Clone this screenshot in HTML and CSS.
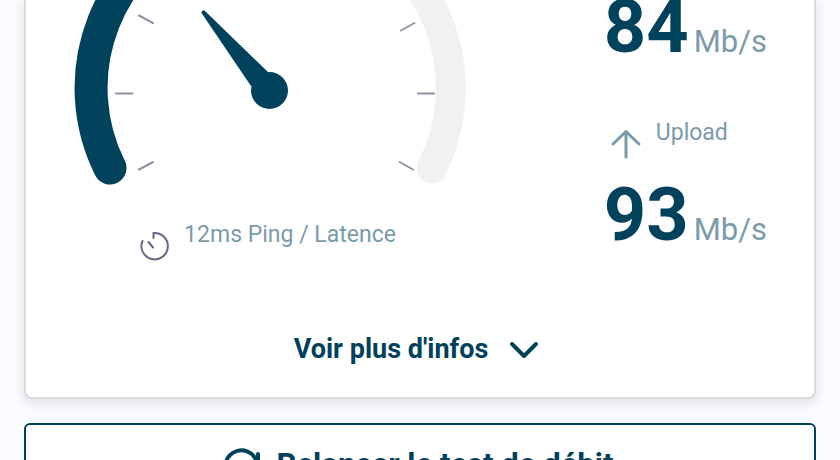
FILE: index.html
```html
<!DOCTYPE html>
<html lang="fr">
<head>
    <meta charset="UTF-8">
    <meta name="viewport" content="width=device-width, initial-scale=1.0">
    <title>Test de débit</title>
    <link rel="stylesheet" href="styles.css">
</head>
<body>
    <main class="page">
        <section class="card">
            <div class="results">
                <div class="speed">
                    <svg class="gauge" viewBox="0 0 400 190" aria-hidden="true">
                        <!-- track and progress -->
                        <path class="gauge-track" d="M266 -80A180.500 180.500 0 0 1 362 168"/>
                        <path class="gauge-progress" d="M40 168A179 179 0 0 1 138 -80"/>
                        <!-- ticks -->
                        <path class="gauge-ticks" d="M69 15.500L83 23M46 93.500H62.500M69 169.500L83 162M331 30.500L344.500 23M348 93.500H364M329.500 162L343 169.500"/>
                        <!-- needle -->
                        <path class="gauge-needle" d="M134.500 10.500L198 72L200 90L181 86L131.500 13Q131 10 134.500 10.500Z"/>
                        <circle class="gauge-needle" cx="199.500" cy="90.500" r="18.500"/>
                    </svg>
                    <div class="info info-ping">
                        <svg class="icon icon-ping" viewBox="0 0 32 32" aria-hidden="true">
                            <path d="M15.500 8V3A13.200 13.200 0 1 1 4.500 11M10.500 12L15 17.500"/>
                        </svg>
                        <span>12ms Ping / Latence</span>
                    </div>
                </div>
                <div class="rates">
                    <p class="rate"><strong>84</strong> <span>Mb/s</span></p>
                    <div class="info info-upload">
                        <svg class="icon" viewBox="0 0 32 32" aria-hidden="true">
                            <path d="M16 29V4M3 16L16 3.500L29 16"/>
                        </svg>
                        <span>Upload</span>
                    </div>
                    <p class="rate"><strong>93</strong> <span>Mb/s</span></p>
                </div>
            </div>
            <button type="button" class="more">
                Voir plus d'infos
                <svg class="more-icon" viewBox="0 0 32 32" aria-hidden="true">
                    <path d="M4 11L16 23L28 11"/>
                </svg>
            </button>
        </section>
        <button type="button" class="restart">
            <svg class="restart-icon" viewBox="0 0 40 40" aria-hidden="true">
                <path d="M35 9V18H26M34 17.500A16 16 0 1 0 33 28"/>
            </svg>
            Relancer le test de débit
        </button>
    </main>
</body>
</html>
```

FILE: styles.css
```css
* {
    box-sizing: border-box;
}
body {
    margin: 0;
    background-color: #fafbfe;
    color: #00425c;
    font-family: Roboto, "Liberation Sans", sans-serif;
    overflow: hidden;
}
.page {
    padding: 0 24px 24px;
}
.card {
    padding-bottom: 32px;
    background-color: #fff;
    border: 2px solid #d9dbdd;
    border-top: none;
    border-radius: 0 0 8px 8px;
    box-shadow: 0 3px 12px rgba(0, 20, 40, 0.13);
}
.results {
    display: flex;
    justify-content: space-between;
    padding: 0 47px 0 44px;
}
.gauge {
    display: block;
    width: 400px;
    margin-bottom: 30px;
}
.gauge path {
    fill: none;
    stroke-linecap: round;
}
.gauge .gauge-track {
    stroke: #f1f1f4;
    stroke-width: 30px;
}
.gauge .gauge-progress {
    stroke: #00425c;
    stroke-width: 33px;
}
.gauge .gauge-ticks {
    stroke: #9291a5;
    stroke-width: 2px;
}
.gauge .gauge-needle {
    fill: #00425c;
}
.info {
    display: flex;
    justify-content: center;
    align-items: flex-start;
    gap: 14px;
    color: #7a9baa;
    font-size: 23px;
    line-height: 30px;
}
.info-ping {
    padding-right: 6px;
}
.info-upload {
    justify-content: flex-start;
    margin: 60px 0 28px 6px;
}
.icon {
    width: 32px;
    height: 32px;
    margin-top: 10px;
    fill: none;
    stroke: #7a9baa;
    stroke-width: 3px;
    stroke-linecap: round;
    stroke-linejoin: round;
}
.icon-ping {
    stroke: #6b6786;
    stroke-width: 2px;
}
.rate {
    display: flex;
    align-items: baseline;
    gap: 5px;
    margin: 0;
}
.rate strong {
    font-size: 74px;
    font-weight: 700;
    line-height: 54px;
}
.rate span {
    color: #7a9baa;
    font-size: 31px;
    line-height: 32px;
}
.more,
.restart {
    display: flex;
    justify-content: center;
    align-items: center;
    width: 100%;
    color: #00425c;
    font-family: inherit;
    font-weight: 700;
    line-height: 32px;
    cursor: pointer;
}
.more {
    gap: 20px;
    margin-top: 71px;
    padding: 0 6px 0 0;
    background: none;
    border: none;
    font-size: 27px;
}
.restart {
    gap: 14px;
    margin-top: 24px;
    padding: 20px 4px 20px 0;
    background-color: #fff;
    border: 2px solid #00425c;
    border-radius: 6px;
    font-size: 31px;
}
.more-icon,
.restart-icon {
    fill: none;
    stroke: #00425c;
    stroke-width: 4px;
    stroke-linecap: round;
    stroke-linejoin: round;
}
.more-icon {
    width: 32px;
    height: 32px;
}
.restart-icon {
    width: 40px;
    height: 40px;
}
```
